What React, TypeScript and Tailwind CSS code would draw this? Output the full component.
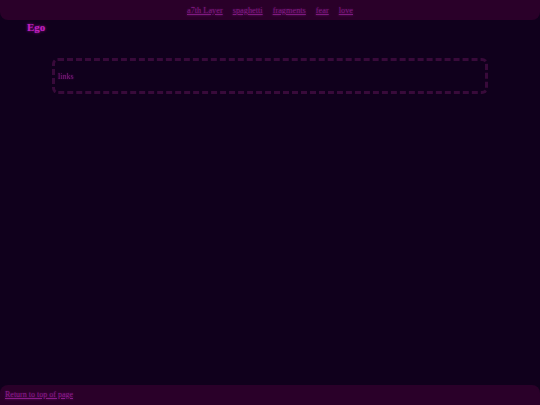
export default function App() {
  return (
    <div className="min-h-[405px] w-full bg-[#10001c] flex flex-col" style={{ fontFamily: '"Liberation Serif", serif' }}>
      <nav className="h-[20px] bg-[#2a0029] rounded-b-[8px] flex items-center justify-center gap-[10px] text-[8.3px] pt-[2px]">
        <a href="#" className="underline text-[#7e1a80] [text-shadow:0_0_2px_#6a106a]">a7th Layer</a>
        <a href="#" className="underline text-[#7e1a80] [text-shadow:0_0_2px_#6a106a]">spaghetti</a>
        <a href="#" className="underline text-[#7e1a80] [text-shadow:0_0_2px_#6a106a]">fragments</a>
        <a href="#" className="underline text-[#7e1a80] [text-shadow:0_0_2px_#6a106a]">fear</a>
        <a href="#" className="underline text-[#7e1a80] [text-shadow:0_0_2px_#6a106a]">love</a>
      </nav>
      <h1 className="pl-[27px] text-[11px] font-bold text-[#c020c0] leading-[14px] [text-shadow:0_0_3px_#a010a0]">Ego</h1>
      <div className="ml-[52px] mr-[52px] mt-[24px] h-[36px] border-[3px] border-dashed border-[#380a3a] rounded-[6px] flex items-center pl-[3px] pt-[2px] blur-[0.5px]">
        <span className="text-[8px] text-[#7a1a7a] [text-shadow:0_0_2px_#6a106a]">links</span>
      </div>
      <div className="flex-1" />
      <footer className="h-[20px] bg-[#2a0029] rounded-t-[8px] flex items-center pl-[5px] text-[8px]">
        <a href="#" className="underline text-[#8a1a8a] [text-shadow:0_0_2px_#6a106a]">Return to top of page</a>
      </footer>
    </div>
  );
}
